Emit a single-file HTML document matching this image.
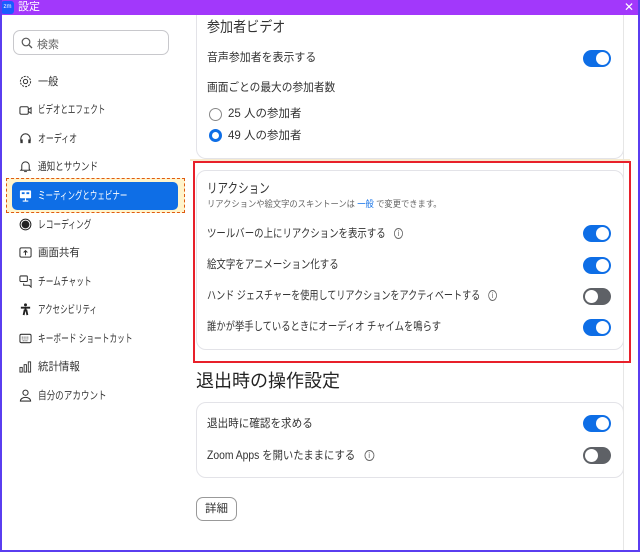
<!DOCTYPE html>
<html><head><meta charset="utf-8"><style>
*{box-sizing:border-box;margin:0;padding:0}
body{width:640px;height:552px;overflow:hidden;background:#fff;font-family:"Liberation Sans","Noto Sans CJK JP",sans-serif;color:#222;position:relative}
.win{position:absolute;left:0;top:0;width:640px;height:552px;border:2px solid #5a3df0;border-top:none}
.title{position:absolute;left:0;top:0;width:640px;height:15px;background:#a238fb;color:#fff;font-size:11px;line-height:15px}
.logo{position:absolute;left:1px;top:1px;width:13px;height:13px;border-radius:3px;background:#1a5cff;font-size:6px;line-height:13px;text-align:center;color:#fff}
.abs{position:absolute}
.search{left:13px;top:30px;width:156px;height:25px;border:1px solid #c8c8cc;border-radius:7px}
.nav{position:absolute;left:38px;font-size:11px;color:#333;line-height:14px;white-space:nowrap;transform-origin:0 50%}
.ic{position:absolute;left:19px;width:13px;height:13px}
.card{position:absolute;background:#fff;border:1px solid #e3e3e8;border-radius:10px}
.t{position:absolute;font-size:11.5px;color:#333;line-height:14px;white-space:nowrap;transform-origin:0 50%}
.tg{position:absolute;left:583px;width:28px;height:17px;border-radius:9px;background:#0e6ee6}
.tg::after{content:"";position:absolute;right:2px;top:2px;width:13px;height:13px;border-radius:50%;background:#fff}
.tg.off{background:#5e6166}
.tg.off::after{right:auto;left:2px}
.info{display:inline-block;width:11px;height:11px;border:1px solid #666;border-radius:50%;font-size:8px;line-height:9px;text-align:center;color:#555;margin-left:10px;vertical-align:1px}
</style></head><body>
<div class="card" style="left:196px;top:3px;width:428px;height:156px;border-top:none"></div>
<div class="abs" style="left:190px;top:159px;width:440px;height:2px;background:#f5ead0"></div>
<div class="card" style="left:196px;top:170px;width:428px;height:180px"></div>
<div class="card" style="left:196px;top:402px;width:428px;height:76px"></div>
<div class="abs" style="left:623px;top:15px;width:1px;height:535px;background:#e6e6e6"></div>
<div class="abs" style="left:193px;top:161px;width:438px;height:202px;border:2px solid #e8202a"></div>

<div class="title"><div class="logo">zm</div><span style="position:absolute;left:18px;top:0">設定</span><span style="position:absolute;right:6px;top:0;font-size:12px">✕</span></div>

<div class="abs search"><svg class="abs" style="left:7px;top:6px" width="12" height="12" viewBox="0 0 12 12"><circle cx="5" cy="5" r="3.8" fill="none" stroke="#555" stroke-width="1.2"/><path d="M8 8l3 3" stroke="#555" stroke-width="1.3"/></svg><span class="abs" style="left:23px;top:5px;font-size:11px;color:#666">検索</span></div>

<svg class="ic" style="top:75px" viewBox="0 0 14 14"><circle cx="7" cy="7" r="2.3" fill="none" stroke="#333" stroke-width="1.1"/><circle cx="7" cy="7" r="5.5" fill="none" stroke="#333" stroke-width="1.1" stroke-dasharray="2.2 1.2"/></svg><div class="nav" style="top:75px;transform:scaleX(.92)">一般</div>
<svg class="ic" style="top:104px" viewBox="0 0 14 14"><rect x="1" y="3" width="9" height="8" rx="1.5" fill="none" stroke="#333" stroke-width="1.1"/><path d="M10 6l3-2v6l-3-2" fill="none" stroke="#333" stroke-width="1.1"/></svg><div class="nav" style="top:103px;transform:scaleX(.68)">ビデオとエフェクト</div>
<svg class="ic" style="top:132px" viewBox="0 0 14 14"><path d="M2 10V7a5 5 0 0110 0v3" fill="none" stroke="#333" stroke-width="1.2"/><rect x="1.5" y="8" width="2.5" height="4" fill="#333"/><rect x="10" y="8" width="2.5" height="4" fill="#333"/></svg><div class="nav" style="top:132px;transform:scaleX(.72)">オーディオ</div>
<svg class="ic" style="top:160px" viewBox="0 0 14 14"><path d="M3 10V6a4 4 0 018 0v4l1 1H2z" fill="none" stroke="#333" stroke-width="1.1"/><path d="M5.5 12.5h3" stroke="#333"/></svg><div class="nav" style="top:160px;transform:scaleX(.78)">通知とサウンド</div>

<div class="abs" style="left:6px;top:178px;width:179px;height:35px;border:1.5px dashed #e05a10;background:#fff4cc"></div>
<div class="abs" style="left:12px;top:182px;width:166px;height:28px;border-radius:5px;background:#0e6ee6"></div>
<svg class="ic" style="top:189px" viewBox="0 0 14 14"><rect x="1" y="1.5" width="12" height="8.5" rx="1" fill="#fff"/><rect x="3" y="3.5" width="3" height="2" fill="#0e6ee6"/><rect x="8" y="3.5" width="3" height="2" fill="#0e6ee6"/><path d="M7 10v3M4 13h6" stroke="#fff" stroke-width="1.2"/></svg><div class="nav" style="top:189px;color:#fff;transform:scaleX(.68)">ミーティングとウェビナー</div>

<svg class="ic" style="top:218px" viewBox="0 0 14 14"><circle cx="7" cy="7" r="5.8" fill="none" stroke="#222" stroke-width="1.1"/><circle cx="7" cy="7" r="4.2" fill="#222"/></svg><div class="nav" style="top:218px;transform:scaleX(.7)">レコーディング</div>
<svg class="ic" style="top:246px" viewBox="0 0 14 14"><rect x="1" y="2" width="12" height="10" rx="1.5" fill="none" stroke="#333" stroke-width="1.1"/><path d="M7 10V5M5 7l2-2 2 2" fill="none" stroke="#333" stroke-width="1.1"/></svg><div class="nav" style="top:246px;transform:scaleX(.95)">画面共有</div>
<svg class="ic" style="top:275px" viewBox="0 0 14 14"><rect x="1" y="1" width="8" height="6" rx="1" fill="none" stroke="#333" stroke-width="1.1"/><path d="M5 9v2h6l2 2V5h-2" fill="none" stroke="#333" stroke-width="1.1"/></svg><div class="nav" style="top:275px;transform:scaleX(.7)">チームチャット</div>
<svg class="ic" style="top:303px" viewBox="0 0 14 14"><circle cx="7" cy="2" r="1.6" fill="#222"/><path d="M2 5h10M7 5v4M5 13l1-5h2l1 5" stroke="#222" stroke-width="2" fill="none"/></svg><div class="nav" style="top:303px;transform:scaleX(.68)">アクセシビリティ</div>
<svg class="ic" style="top:332px" viewBox="0 0 14 14"><rect x="1" y="2.5" width="12" height="9" rx="1.5" fill="none" stroke="#333" stroke-width="1.1"/><path d="M3 5.5h8M3 7.5h8M4 9.5h6" stroke="#333" stroke-dasharray="1 1"/></svg><div class="nav" style="top:332px;transform:scaleX(.7)">キーボード ショートカット</div>
<svg class="ic" style="top:360px" viewBox="0 0 14 14"><rect x="1" y="8" width="2.5" height="5" fill="none" stroke="#333"/><rect x="5.5" y="5" width="2.5" height="8" fill="none" stroke="#333"/><rect x="10" y="2" width="2.5" height="11" fill="none" stroke="#333"/></svg><div class="nav" style="top:360px;transform:scaleX(.95)">統計情報</div>
<svg class="ic" style="top:389px" viewBox="0 0 14 14"><circle cx="7" cy="4" r="2.8" fill="none" stroke="#333" stroke-width="1.1"/><path d="M1.5 13a5.5 4 0 0111 0z" fill="none" stroke="#333" stroke-width="1.1"/></svg><div class="nav" style="top:389px;transform:scaleX(.78)">自分のアカウント</div>

<div class="t" style="left:207px;top:19px;font-size:14.5px;line-height:18px;transform:scaleX(.9)">参加者ビデオ</div>
<div class="t" style="left:207px;top:51px;transform:scaleX(.95)">音声参加者を表示する</div><div class="tg" style="top:50px"></div>
<div class="t" style="left:207px;top:81px;transform:scaleX(.93)">画面ごとの最大の参加者数</div>
<div class="abs" style="left:209px;top:108px;width:13px;height:13px;border:1px solid #888;border-radius:50%"></div><div class="t" style="left:228px;top:107px">25 人の参加者</div>
<div class="abs" style="left:209px;top:129px;width:13px;height:13px;border:3.5px solid #0e6ee6;border-radius:50%"></div><div class="t" style="left:228px;top:129px">49 人の参加者</div>

<div class="t" style="left:207px;top:180px;font-size:13.5px;line-height:17px;transform:scaleX(.78)">リアクション</div>
<div class="t" style="left:207px;top:198px;font-size:9px;color:#666;line-height:12px;transform:scaleX(.92)">リアクションや絵文字のスキントーンは <span style="color:#0e6ee6">一般</span> で変更できます。</div>
<div class="t" style="left:207px;top:227px;transform:scaleX(.82)">ツールバーの上にリアクションを表示する<span class="info">i</span></div><div class="tg" style="top:225px"></div>
<div class="t" style="left:207px;top:258px;transform:scaleX(.82)">絵文字をアニメーション化する</div><div class="tg" style="top:257px"></div>
<div class="t" style="left:207px;top:289px;transform:scaleX(.79)">ハンド ジェスチャーを使用してリアクションをアクティベートする<span class="info">i</span></div><div class="tg off" style="top:288px"></div>
<div class="t" style="left:207px;top:320px;transform:scaleX(.81)">誰かが挙手しているときにオーディオ チャイムを鳴らす</div><div class="tg" style="top:319px"></div>

<div class="t" style="left:196px;top:370px;font-size:18px;line-height:22px;color:#222">退出時の操作設定</div>
<div class="t" style="left:207px;top:417px;transform:scaleX(.92)">退出時に確認を求める</div><div class="tg" style="top:415px"></div>
<div class="t" style="left:207px;top:449px;transform:scaleX(.9)">Zoom Apps を開いたままにする<span class="info">i</span></div><div class="tg off" style="top:447px"></div>

<div class="abs" style="left:196px;top:497px;width:41px;height:24px;border:1px solid #999;border-radius:7px;background:#fff;font-size:11.5px;line-height:22px;text-align:center;color:#333">詳細</div>

<div class="win"></div>
</body></html>
